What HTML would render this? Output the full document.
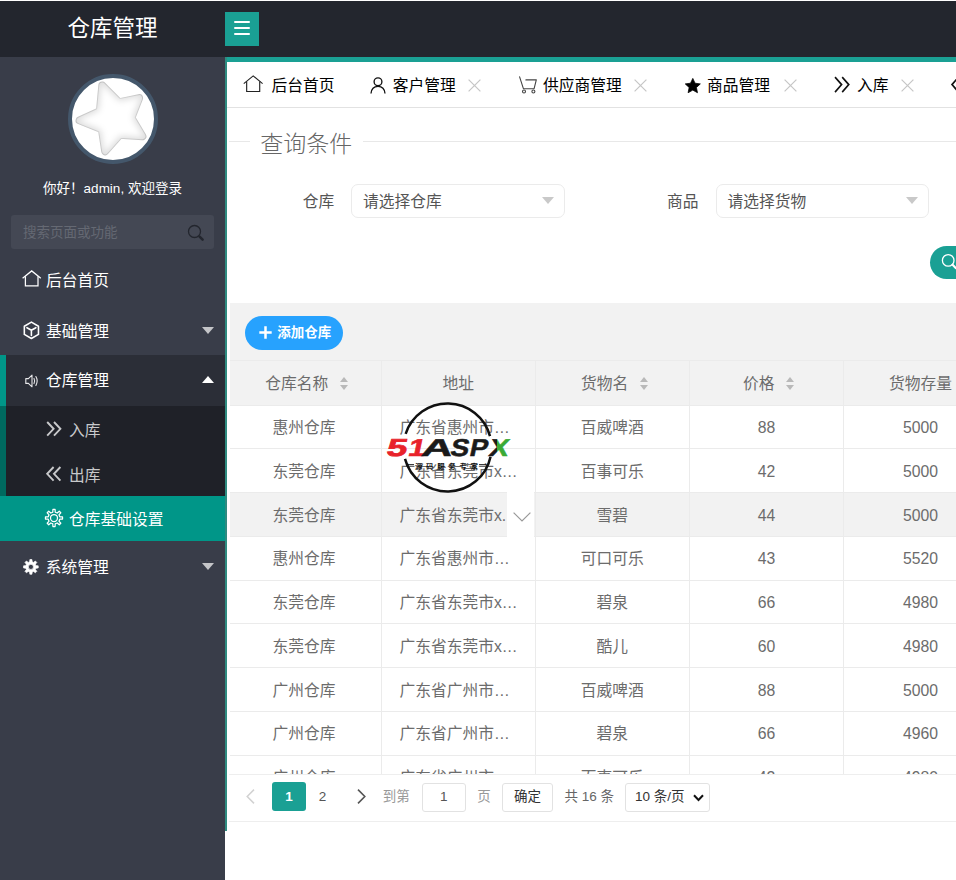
<!DOCTYPE html>
<html lang="zh-CN">
<head>
<meta charset="utf-8">
<title>仓库管理</title>
<style>
*{box-sizing:border-box;margin:0;padding:0}
html,body{width:956px;height:880px;overflow:hidden;background:#fff}
body{position:relative;font-family:"Liberation Sans","Noto Sans CJK SC",sans-serif;font-size:15.75px;color:#333;-webkit-font-smoothing:antialiased}
.abs{position:absolute}
.t{position:absolute;white-space:nowrap;line-height:24px;height:24px;margin-top:.5px}
svg{position:absolute;overflow:visible}
/* header */
#hdr{left:0;top:1px;width:956px;height:56px;background:#23262e}
#logo{left:0;top:14px;width:225px;text-align:center;color:#fff;font-size:22.5px;line-height:30px;height:30px}
#ham{left:225px;top:12px;width:34px;height:34px;background:#1aa094}
#ham i{position:absolute;left:9px;width:16px;height:2px;background:#fff;border-radius:1px}
/* sidebar */
#side{left:0;top:57px;width:224.6px;height:823px;background:#393d49}
#ava{left:67.8px;top:73.7px;width:90.4px;height:90.4px;border-radius:50%;border:4.4px solid #44576b;background:#fff;overflow:hidden}
#hello{left:0;top:176px;width:225px;text-align:center;color:#fff;font-size:13.5px}
#sbox{left:11px;top:215px;width:203px;height:34px;background:#444854;border-radius:3px}
#sph{left:23px;top:220px;color:#656973;font-size:13.5px}
.nav{position:absolute;left:0;width:225px;color:#fff}
.nav .t{font-size:15.75px}
.tri{position:absolute;width:0;height:0;border-left:6px solid transparent;border-right:6px solid transparent}
.tri.d{border-top:7px solid #c4c5c8}
.tri.u{border-bottom:7px solid #fff}
/* content */
#tealtop{left:225px;top:57px;width:731px;height:5px;background:#1aa094}
#tealleft{left:224.6px;top:57px;width:2.4px;height:773.8px;background:#2f8b80}
#tabline{left:227px;top:107px;width:729px;height:1px;background:#e2e2e2}
.tab{font-size:15.75px;color:#000}
.x{position:absolute;width:13px;height:13px}
#fsline{left:229px;top:141px;width:727px;height:1px;background:#e8e8e8}
#legend{left:250px;top:128px;width:112.6px;height:32px;background:#fff;text-align:center;font-size:23px;font-weight:300;color:#666;line-height:32px}
.lab{color:#555;font-size:15.75px}
.sel{position:absolute;height:33.8px;border:1px solid #ebebeb;border-radius:7px;background:#fff}
.sel .t{left:11px;top:4px;color:#555;font-size:15.75px}
.sel .tri{right:10px;top:12px;border-top:7px solid #c9c9c9}
#sbtn{left:930px;top:246px;width:60px;height:33px;border-radius:17px;background:#1aa094}
/* table */
#gray{left:229.5px;top:302.8px;width:727px;height:102.2px;background:#f2f2f2}
#addbtn{left:245px;top:315.8px;width:98px;height:34px;border-radius:17px;background:#27a2fe;color:#fff}
.hl{position:absolute;background:#ebebeb}
.cell{position:absolute;margin-top:1px;height:24px;line-height:24px;font-size:15.75px;color:#6c6c6c;white-space:nowrap;text-align:center}
.sort{position:absolute;width:0;height:0;border-left:4.5px solid transparent;border-right:4.5px solid transparent}
.sort.u{border-bottom:5px solid #b9b9b9}
.sort.d{border-top:5px solid #b9b9b9}
/* pager */
#pgbg{left:227px;top:774px;width:729px;height:48px;background:#fff}
.pg{font-size:13.5px;color:#333}
.box{position:absolute;border:1px solid #e2e2e2;border-radius:3px;background:#fff}
</style>
</head>
<body>
<!-- HEADER -->
<div id="hdr" class="abs"></div>
<div id="logo" class="abs">仓库管理</div>
<div id="ham" class="abs"><i style="top:9.3px"></i><i style="top:15px"></i><i style="top:21px"></i></div>

<!-- SIDEBAR -->
<div id="side" class="abs"></div>
<div id="ava" class="abs">
<svg width="82" height="82" viewBox="0 0 82 82" style="left:0;top:0">
<defs><filter id="bl" x="-20%" y="-20%" width="140%" height="140%"><feGaussianBlur stdDeviation="3.2"/></filter></defs>
<path d="M30.3 7.5 L47.0 24.3 L67.1 20.1 L59.4 39.9 L70.4 58.2 L47.9 56.7 L33.2 73.2 L29.9 51.3 L7.6 42.4 L27.9 33.2 Z" fill="#bcbcbc" stroke="#bcbcbc" stroke-width="8" stroke-linejoin="round"/>
<path d="M30.3 7.5 L47.0 24.3 L67.1 20.1 L59.4 39.9 L70.4 58.2 L47.9 56.7 L33.2 73.2 L29.9 51.3 L7.6 42.4 L27.9 33.2 Z" fill="#dedede" stroke="#dedede" stroke-width="6" stroke-linejoin="round"/>
<path d="M30.3 7.5 L47.0 24.3 L67.1 20.1 L59.4 39.9 L70.4 58.2 L47.9 56.7 L33.2 73.2 L29.9 51.3 L7.6 42.4 L27.9 33.2 Z" fill="#fff" stroke="#fff" stroke-width="2" stroke-linejoin="round" filter="url(#bl)"/>
</svg>
</div>
<div id="hello" class="t">你好！admin, 欢迎登录</div>
<div id="sbox" class="abs"></div>
<div id="sph" class="t">搜索页面或功能</div>
<svg id="sico" width="18" height="18" viewBox="0 0 18 18" style="left:187px;top:224px"><circle cx="7.5" cy="7.5" r="6" fill="none" stroke="#23262e" stroke-width="1.3"/><path d="M12.6 12.6 L15.6 15.6" stroke="#23262e" stroke-width="2.6" stroke-linecap="round"/></svg>

<!-- nav -->
<div class="nav" style="top:355px;height:186px;background:#2b2e37"></div>
<div class="abs" style="left:0;top:405.7px;width:225px;height:90px;background:#1f2128"></div>
<div class="abs" style="left:0;top:355px;width:6px;height:50.7px;background:#009688"></div>
<div class="abs" style="left:0;top:405.7px;width:6px;height:90px;background:#00695f"></div>
<div class="abs" style="left:0;top:495.7px;width:225px;height:45px;background:#009688"></div>

<svg width="20" height="17" viewBox="0 0 20 17" style="left:22px;top:270.2px" fill="none" stroke="#fff" stroke-width="1.25" stroke-linejoin="miter"><path d="M0.6 8.3 L9.7 0.9 L18.8 8.3"/><path d="M3.4 6.2 V15.9 H16 V6.2"/></svg>
<div class="t nav-t" style="left:46px;top:268px;color:#fff">后台首页</div>

<svg width="16.8" height="18.6" viewBox="0 0 18 20" style="left:22.7px;top:321.2px" fill="none" stroke="#fff" stroke-width="1.7" stroke-linejoin="round"><path d="M9 1.2 L16.6 5.6 V14.4 L9 18.8 L1.4 14.4 V5.6 Z"/><path d="M4.2 7.2 L9 10 L13.8 7.2 M9 10 V15.6" stroke-linecap="round"/></svg>
<div class="t nav-t" style="left:46px;top:319px;color:#fff">基础管理</div>
<div class="tri d" style="left:202px;top:327px"></div>

<svg width="14" height="14" viewBox="0 0 14 14" style="left:24.5px;top:374px" fill="none" stroke="#e8e8ea" stroke-width="1.1" stroke-linejoin="round"><path d="M0.8 4.6 H3.4 L7 1.2 V12.8 L3.4 9.4 H0.8 Z"/><path d="M9 4.4 Q10.4 7 9 9.6" stroke-linecap="round"/><path d="M10.9 2.6 Q13.4 7 10.9 11.4" stroke-linecap="round"/></svg>
<div class="t nav-t" style="left:46px;top:368.5px;color:#fff">仓库管理</div>
<div class="tri u" style="left:202px;top:376px"></div>

<svg width="16" height="16" viewBox="0 0 16 16" style="left:46px;top:420.5px" fill="none" stroke="#c8c9cb" stroke-width="1.9"><path d="M1.2 1 L7.6 7.8 L1.2 14.6"/><path d="M8 1 L14.4 7.8 L8 14.6"/></svg>
<div class="t nav-t" style="left:69px;top:418px;color:#c8c9cb">入库</div>
<svg width="16" height="16" viewBox="0 0 16 16" style="left:46px;top:465.5px" fill="none" stroke="#c8c9cb" stroke-width="1.9"><path d="M7.6 1 L1.2 7.8 L7.6 14.6"/><path d="M14.4 1 L8 7.8 L14.4 14.6"/></svg>
<div class="t nav-t" style="left:69px;top:463px;color:#c8c9cb">出库</div>

<svg width="20" height="20" viewBox="0 0 20 20" style="left:44.1px;top:507.9px" fill="none" stroke="#fff" stroke-width="1.25" stroke-linejoin="round"><path d="M11.24 15.77 L11.08 18.53 L8.92 18.53 L8.76 15.77 L6.80 14.96 L4.73 16.80 L3.20 15.27 L5.04 13.20 L4.23 11.24 L1.47 11.08 L1.47 8.92 L4.23 8.76 L5.04 6.80 L3.20 4.73 L4.73 3.20 L6.80 5.04 L8.76 4.23 L8.92 1.47 L11.08 1.47 L11.24 4.23 L13.20 5.04 L15.27 3.20 L16.80 4.73 L14.96 6.80 L15.77 8.76 L18.53 8.92 L18.53 11.08 L15.77 11.24 L14.96 13.20 L16.80 15.27 L15.27 16.80 L13.20 14.96 Z"/><circle cx="10" cy="10" r="3.5"/></svg>
<div class="t nav-t" style="left:69px;top:507.5px;color:#fff">仓库基础设置</div>

<svg width="17.8" height="17.8" viewBox="0 0 20 20" style="left:22.4px;top:557.5px" fill="#fff" fill-rule="evenodd" stroke="#fff" stroke-width="0.8" stroke-linejoin="round"><path d="M11.42 15.73 L11.17 18.22 L8.83 18.22 L8.58 15.73 L6.96 15.05 L5.02 16.64 L3.36 14.98 L4.95 13.04 L4.27 11.42 L1.78 11.17 L1.78 8.83 L4.27 8.58 L4.95 6.96 L3.36 5.02 L5.02 3.36 L6.96 4.95 L8.58 4.27 L8.83 1.78 L11.17 1.78 L11.42 4.27 L13.04 4.95 L14.98 3.36 L16.64 5.02 L15.05 6.96 L15.73 8.58 L18.22 8.83 L18.22 11.17 L15.73 11.42 L15.05 13.04 L16.64 14.98 L14.98 16.64 L13.04 15.05 Z M10 7.1 a2.9 2.9 0 1 0 0 5.8 a2.9 2.9 0 1 0 0 -5.8 Z"/></svg>
<div class="t nav-t" style="left:45.7px;top:555.9px;color:#fff">系统管理</div>
<div class="tri d" style="left:202px;top:563px"></div>


<!-- CONTENT -->
<div id="tealtop" class="abs"></div>
<div id="tealleft" class="abs"></div>
<!-- tabs -->
<svg width="21" height="17.6" viewBox="0 0 20 17" style="left:243px;top:75.4px" fill="none" stroke="#222" stroke-width="1.1"><path d="M0.6 8.3 L9.7 0.9 L18.8 8.3"/><path d="M3.4 6.2 V15.9 H16 V6.2"/></svg>
<div class="t tab" style="left:271.5px;top:73.5px">后台首页</div>
<svg width="16" height="17" viewBox="0 0 16 17" style="left:370.2px;top:76.5px" fill="none" stroke="#111" stroke-width="1.35"><circle cx="8" cy="4.8" r="3.9"/><path d="M1 16.5 C1.4 11.5 4.4 9.3 8 9.3 C11.6 9.3 14.6 11.5 15 16.5"/></svg>
<div class="t tab" style="left:392.7px;top:73.5px">客户管理</div>
<svg class="x" width="13" height="13" viewBox="0 0 13 13" style="left:467.5px;top:79px" stroke="#c6c6c6" stroke-width="1.2" fill="none"><path d="M0.6 0.6 L12.4 12.4 M12.4 0.6 L0.6 12.4"/></svg>
<svg width="20" height="18" viewBox="0 0 20 18" style="left:517.5px;top:76.5px" fill="none" stroke="#444" stroke-width="1.1" stroke-linecap="round" stroke-linejoin="round"><path d="M1.6 -0.2 L5.4 11.7 H16.1 L18.3 2.9 H7.9"/><circle cx="6" cy="14.5" r="1.5"/><circle cx="15.4" cy="14.5" r="1.5"/></svg>
<div class="t tab" style="left:543px;top:73.5px">供应商管理</div>
<svg class="x" width="13" height="13" viewBox="0 0 13 13" style="left:633.7px;top:79px" stroke="#c6c6c6" stroke-width="1.2" fill="none"><path d="M0.6 0.6 L12.4 12.4 M12.4 0.6 L0.6 12.4"/></svg>
<svg width="15.6" height="15" viewBox="0 0 24 23" style="left:684.6px;top:77.6px" fill="#000"><path d="M12 0.6 L15.5 8 L23.6 9 L17.6 14.6 L19.2 22.6 L12 18.6 L4.8 22.6 L6.4 14.6 L0.4 9 L8.5 8 Z" stroke="#000" stroke-width="1.2" stroke-linejoin="round"/></svg>
<div class="t tab" style="left:707px;top:73.5px">商品管理</div>
<svg class="x" width="13" height="13" viewBox="0 0 13 13" style="left:783.5px;top:79px" stroke="#c6c6c6" stroke-width="1.2" fill="none"><path d="M0.6 0.6 L12.4 12.4 M12.4 0.6 L0.6 12.4"/></svg>
<svg width="16.4" height="17.6" viewBox="0 0 16 16" preserveAspectRatio="none" style="left:834.2px;top:76.3px" fill="none" stroke="#111" stroke-width="1.6"><path d="M1 1 L7.4 7.8 L1 14.6"/><path d="M8 1 L14.4 7.8 L8 14.6"/></svg>
<div class="t tab" style="left:857px;top:73.5px">入库</div>
<svg class="x" width="13" height="13" viewBox="0 0 13 13" style="left:901.2px;top:79px" stroke="#c6c6c6" stroke-width="1.2" fill="none"><path d="M0.6 0.6 L12.4 12.4 M12.4 0.6 L0.6 12.4"/></svg>
<svg width="16.4" height="17.6" viewBox="0 0 16 16" preserveAspectRatio="none" style="left:951.3px;top:76.3px" fill="none" stroke="#111" stroke-width="1.6"><path d="M7.4 1 L1 7.8 L7.4 14.6"/><path d="M14.4 1 L8 7.8 L14.4 14.6"/></svg>

<div id="tabline" class="abs"></div>
<div id="fsline" class="abs"></div>
<div id="legend" class="abs">查询条件</div>
<!-- form -->
<div class="t lab" style="left:302.8px;top:189.5px">仓库</div>
<div class="sel" style="left:351px;top:184.2px;width:214px"><div class="t">请选择仓库</div><div class="tri"></div></div>
<div class="t lab" style="left:667px;top:189.5px">商品</div>
<div class="sel" style="left:715.5px;top:184.2px;width:213px"><div class="t">请选择货物</div><div class="tri"></div></div>
<div id="sbtn" class="abs"></div>
<svg width="18" height="18" viewBox="0 0 18 18" style="left:941.5px;top:253.5px"><circle cx="6.2" cy="6.4" r="5.8" fill="none" stroke="#fff" stroke-width="1.3"/><path d="M10.6 10.8 L14 14.2" stroke="#fff" stroke-width="2.2" stroke-linecap="round"/></svg>

<!-- table -->
<div id="gray" class="abs"></div>
<div id="addbtn" class="abs"></div>
<svg width="13" height="13" viewBox="0 0 13 13" style="left:258.7px;top:326.3px" stroke="#fff" stroke-width="2.5"><path d="M6.5 0.3 V12.7 M0.3 6.5 H12.7"/></svg>
<div class="t" style="left:277.2px;top:320.5px;font-size:13.5px;font-weight:bold;color:#fff">添加仓库</div>
<div class="abs" style="left:229.5px;top:492.10px;width:726.5px;height:44.6px;background:#f2f2f2"></div>
<div class="hl" style="left:229.5px;top:360.2px;width:726.5px;height:1px"></div>
<div class="hl" style="left:229.5px;top:404.60px;width:726.5px;height:1px"></div>
<div class="hl" style="left:229.5px;top:448.35px;width:726.5px;height:1px"></div>
<div class="hl" style="left:229.5px;top:492.10px;width:726.5px;height:1px"></div>
<div class="hl" style="left:229.5px;top:535.85px;width:726.5px;height:1px"></div>
<div class="hl" style="left:229.5px;top:579.60px;width:726.5px;height:1px"></div>
<div class="hl" style="left:229.5px;top:623.35px;width:726.5px;height:1px"></div>
<div class="hl" style="left:229.5px;top:667.10px;width:726.5px;height:1px"></div>
<div class="hl" style="left:229.5px;top:710.85px;width:726.5px;height:1px"></div>
<div class="hl" style="left:229.5px;top:754.60px;width:726.5px;height:1px"></div>
<div class="hl" style="left:380.52px;top:361px;width:1px;height:413px"></div>
<div class="hl" style="left:534.65px;top:361px;width:1px;height:413px"></div>
<div class="hl" style="left:688.77px;top:361px;width:1px;height:413px"></div>
<div class="hl" style="left:842.90px;top:361px;width:1px;height:413px"></div>
<div class="cell" style="left:265.2px;top:371.4px">仓库名称</div><div class="sort u" style="left:339.8px;top:377px"></div><div class="sort d" style="left:339.8px;top:384.5px"></div>
<div class="cell" style="left:388.30px;width:140px;top:371.40px;">地址</div>
<div class="cell" style="left:581px;top:371.4px">货物名</div><div class="sort u" style="left:640.0px;top:377px"></div><div class="sort d" style="left:640.0px;top:384.5px"></div>
<div class="cell" style="left:743px;top:371.4px">价格</div><div class="sort u" style="left:785.7px;top:377px"></div><div class="sort d" style="left:785.7px;top:384.5px"></div>
<div class="cell" style="left:889px;top:371.4px">货物存量</div>
<div class="cell" style="left:234.06px;width:140px;top:415.00px;">惠州仓库</div>
<div class="cell" style="left:399.5px;top:415.00px;text-align:left">广东省惠州市…</div>
<div class="cell" style="left:542.31px;width:140px;top:415.00px;">百威啤酒</div>
<div class="cell" style="left:696.44px;width:140px;top:415.00px;">88</div>
<div class="cell" style="left:850.56px;width:140px;top:415.00px;">5000</div>
<div class="cell" style="left:234.06px;width:140px;top:458.75px;">东莞仓库</div>
<div class="cell" style="left:399.5px;top:458.75px;text-align:left">广东省东莞市x…</div>
<div class="cell" style="left:542.31px;width:140px;top:458.75px;">百事可乐</div>
<div class="cell" style="left:696.44px;width:140px;top:458.75px;">42</div>
<div class="cell" style="left:850.56px;width:140px;top:458.75px;">5000</div>
<div class="cell" style="left:234.06px;width:140px;top:502.50px;">东莞仓库</div>
<div class="cell" style="left:399.5px;top:502.50px;text-align:left">广东省东莞市x.</div>
<div class="cell" style="left:542.31px;width:140px;top:502.50px;">雪碧</div>
<div class="cell" style="left:696.44px;width:140px;top:502.50px;">44</div>
<div class="cell" style="left:850.56px;width:140px;top:502.50px;">5000</div>
<div class="cell" style="left:234.06px;width:140px;top:546.25px;">惠州仓库</div>
<div class="cell" style="left:399.5px;top:546.25px;text-align:left">广东省惠州市…</div>
<div class="cell" style="left:542.31px;width:140px;top:546.25px;">可口可乐</div>
<div class="cell" style="left:696.44px;width:140px;top:546.25px;">43</div>
<div class="cell" style="left:850.56px;width:140px;top:546.25px;">5520</div>
<div class="cell" style="left:234.06px;width:140px;top:590.00px;">东莞仓库</div>
<div class="cell" style="left:399.5px;top:590.00px;text-align:left">广东省东莞市x…</div>
<div class="cell" style="left:542.31px;width:140px;top:590.00px;">碧泉</div>
<div class="cell" style="left:696.44px;width:140px;top:590.00px;">66</div>
<div class="cell" style="left:850.56px;width:140px;top:590.00px;">4980</div>
<div class="cell" style="left:234.06px;width:140px;top:633.75px;">东莞仓库</div>
<div class="cell" style="left:399.5px;top:633.75px;text-align:left">广东省东莞市x…</div>
<div class="cell" style="left:542.31px;width:140px;top:633.75px;">酷儿</div>
<div class="cell" style="left:696.44px;width:140px;top:633.75px;">60</div>
<div class="cell" style="left:850.56px;width:140px;top:633.75px;">4980</div>
<div class="cell" style="left:234.06px;width:140px;top:677.50px;">广州仓库</div>
<div class="cell" style="left:399.5px;top:677.50px;text-align:left">广东省广州市…</div>
<div class="cell" style="left:542.31px;width:140px;top:677.50px;">百威啤酒</div>
<div class="cell" style="left:696.44px;width:140px;top:677.50px;">88</div>
<div class="cell" style="left:850.56px;width:140px;top:677.50px;">5000</div>
<div class="cell" style="left:234.06px;width:140px;top:721.25px;">广州仓库</div>
<div class="cell" style="left:399.5px;top:721.25px;text-align:left">广东省广州市…</div>
<div class="cell" style="left:542.31px;width:140px;top:721.25px;">碧泉</div>
<div class="cell" style="left:696.44px;width:140px;top:721.25px;">66</div>
<div class="cell" style="left:850.56px;width:140px;top:721.25px;">4960</div>
<div class="cell" style="left:234.06px;width:140px;top:765.00px;">广州仓库</div>
<div class="cell" style="left:399.5px;top:765.00px;text-align:left">广东省广州市…</div>
<div class="cell" style="left:542.31px;width:140px;top:765.00px;">百事可乐</div>
<div class="cell" style="left:696.44px;width:140px;top:765.00px;">42</div>
<div class="cell" style="left:850.56px;width:140px;top:765.00px;">4980</div>
<div class="abs" style="left:507px;top:492.10px;width:27.2px;height:44.6px;background:#fff"></div>
<svg width="18" height="10" viewBox="0 0 18 10" style="left:512.5px;top:511.5px" fill="none" stroke="#999" stroke-width="1.2"><path d="M0.6 0.6 L9 9 L17.4 0.6"/></svg>
<svg id="wm" width="130" height="96" viewBox="0 0 130 96" style="left:384px;top:400px">
<defs><clipPath id="xl"><rect x="100" y="30" width="12.9" height="30"/></clipPath><clipPath id="xr"><rect x="112.9" y="30" width="20" height="30"/></clipPath></defs>
<path d="M106.54 56.65 A44 44 0 0 1 21.00 58.89 M21.65 33.90 A44 44 0 0 1 106.00 36.11" fill="none" stroke="#111" stroke-width="2.5"/>
<g font-family="'Liberation Sans',sans-serif" font-weight="bold" font-size="24.4">
<text transform="translate(1.5 55.8) skewX(-12) scale(1.5 1)" fill="#e8222a" stroke="#e8222a" stroke-width="0.7">5</text>
<text transform="translate(23.2 55.8) skewX(-12) scale(1.24 1)" fill="#e8222a" stroke="#e8222a" stroke-width="0.7">1</text>
<text transform="translate(36.3 55.8) skewX(-12) scale(1.78 1)" fill="#1a1a1a" stroke="#1a1a1a" stroke-width="0.5">A</text>
<text transform="translate(65.3 55.8) skewX(-12) scale(1.14 1)" fill="#1a1a1a" stroke="#1a1a1a" stroke-width="0.5">S</text>
<text transform="translate(84.6 55.8) skewX(-12) scale(1.12 1)" fill="#1a1a1a" stroke="#1a1a1a" stroke-width="0.5">P</text>
<g clip-path="url(#xl)"><text transform="translate(103.9 55.8) skewX(-12) scale(1.19 1)" fill="#1a1a1a" stroke="#1a1a1a" stroke-width="0.5">X</text></g>
<g clip-path="url(#xr)"><text transform="translate(103.9 55.8) skewX(-12) scale(1.19 1)" fill="#3aaa35" stroke="#3aaa35" stroke-width="0.5">X</text></g>
</g>
<text x="31" y="69.2" font-size="7.4" font-weight="bold" fill="#111" textLength="63" font-family="'Liberation Sans','Noto Sans CJK SC',sans-serif">源码服务专家</text>
<path d="M22.5 64.6 H30 M95 64.6 H102.5" stroke="#111" stroke-width="0.9"/>
</svg>
<div id="pgbg" class="abs"></div>
<div class="hl" style="left:229px;top:773.5px;width:727px;height:1px;background:#eee"></div>
<div class="hl" style="left:229px;top:821.3px;width:727px;height:1px;background:#eeeeee"></div>
<svg width="9" height="15" viewBox="0 0 9 15" style="left:246.2px;top:789.2px" fill="none" stroke="#d2d2d2" stroke-width="1.5"><path d="M8 0.6 L1.2 7.5 L8 14.4"/></svg>
<div class="abs" style="left:272px;top:782.3px;width:34px;height:28.7px;border-radius:3px;background:#1aa094"></div>
<div class="t pg" style="left:272.2px;width:33.6px;text-align:center;top:784.4px;color:#fff;font-weight:bold">1</div>
<div class="t pg" style="left:305.8px;width:33.6px;text-align:center;top:784.4px;color:#555">2</div>
<svg width="9" height="15" viewBox="0 0 9 15" style="left:357.2px;top:789.2px" fill="none" stroke="#555" stroke-width="1.6"><path d="M1 0.6 L7.8 7.5 L1 14.4"/></svg>
<div class="t pg" style="left:382.7px;top:784.4px;color:#999">到第</div>
<div class="box" style="left:421.5px;top:782.7px;width:44.7px;height:29px"></div>
<div class="t pg" style="left:421.5px;width:44.7px;text-align:center;top:784.4px;color:#555">1</div>
<div class="t pg" style="left:477.2px;top:784.4px;color:#999">页</div>
<div class="box" style="left:502.4px;top:782.7px;width:50.3px;height:29px"></div>
<div class="t pg" style="left:502.4px;width:50.3px;text-align:center;top:784.4px;color:#333">确定</div>
<div class="t pg" style="left:564.5px;top:784.4px;color:#666">共 16 条</div>
<div class="box" style="left:625px;top:782.7px;width:84.5px;height:29px"></div>
<div class="t pg" style="left:635px;top:784.4px;color:#333">10 条/页</div>
<svg width="11" height="8" viewBox="0 0 11 8" style="left:692.5px;top:793.5px" fill="none" stroke="#111" stroke-width="2"><path d="M1 1.2 L5.5 6 L10 1.2"/></svg>
</body>
</html>
